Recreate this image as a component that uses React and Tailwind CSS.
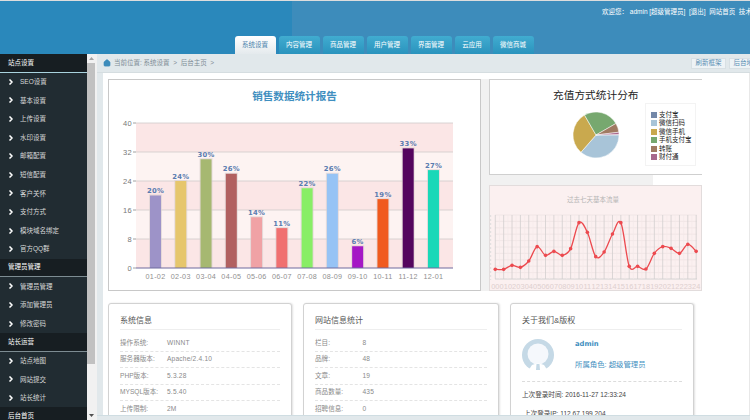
import { ChevronRight, House } from "lucide-react";

const sideMenu = [
  { title: "站点设置", line: "border-[#a9d3de]", items: ["SEO设置", "基本设置", "上传设置", "水印设置", "邮箱配置", "短信配置", "客户关怀", "支付方式", "模块域名绑定", "官方QQ群"] },
  { title: "管理员管理", line: "border-[#7d8c92]", items: ["管理员管理", "添加管理员", "修改密码"] },
  { title: "站长运营", line: "border-[#7d8c92]", items: ["站点地图", "网站提交", "站长统计"] },
  { title: "后台首页", line: "border-[#7d8c92]", items: [] },
];

const tabs = [
  { name: "内容管理", w: "w-[41px]" },
  { name: "商品管理", w: "w-[41px]" },
  { name: "用户管理", w: "w-[41px]" },
  { name: "界面管理", w: "w-[41px]" },
  { name: "云应用", w: "w-[35px]" },
  { name: "微信商城", w: "w-[41px]" },
];

const bars = [
  ["01-02", 20, "#9d93c8"],
  ["02-03", 24, "#e6c66c"],
  ["03-04", 30, "#a6b871"],
  ["04-05", 26, "#b16060"],
  ["05-06", 14, "#f0a2a5"],
  ["06-07", 11, "#f07070"],
  ["07-08", 22, "#88ee66"],
  ["08-09", 26, "#96c3f5"],
  ["09-10", 6, "#a517c5"],
  ["10-11", 19, "#f05a1e"],
  ["11-12", 33, "#54055e"],
  ["12-01", 27, "#19d8b8"],
];

const pieSlices = [
  { from: 0, to: 131, color: "#a8c4d8" },
  { from: 131, to: 240, color: "#c9a94e" },
  { from: 240, to: 330, color: "#77a86f" },
  { from: 330, to: 353, color: "#a07a62" },
  { from: 353, to: 359, color: "#a8688c" },
];

const pieLegend = [
  ["支付宝", "#7488a8"],
  ["微信扫码", "#a8c4d8"],
  ["微信手机", "#c9a94e"],
  ["手机支付宝", "#77a86f"],
  ["转账", "#a07a62"],
  ["财付通", "#a8688c"],
];

const traffic = [178, 178, 166, 172, 153, 110, 136, 124, 136, 116, 38, 67, 140, 126, 72, 38, 169, 169, 177, 130, 110, 115, 130, 103, 124];

const systemInfo = [
  ["操作系统:", "WINNT"],
  ["服务器版本:", "Apache/2.4.10"],
  ["PHP版本:", "5.3.28"],
  ["MYSQL版本:", "5.5.40"],
  ["上传限制:", "2M"],
];

const siteInfo = [
  ["栏目:", "8"],
  ["品牌:", "48"],
  ["文章:", "19"],
  ["商品数量:", "435"],
  ["招聘信息:", "0"],
];

const slicePath = (cx, cy, r, from, to) => {
  const a = (from * Math.PI) / 180;
  const b = (to * Math.PI) / 180;
  const large = to - from > 180 ? 1 : 0;
  return `M${cx} ${cy}L${cx + r * Math.cos(a)} ${cy + r * Math.sin(a)}A${r} ${r} 0 ${large} 1 ${cx + r * Math.cos(b)} ${cy + r * Math.sin(b)}Z`;
};

// smooth line through the points
const smoothPath = (pts) => {
  let d = `M${pts[0][0]} ${pts[0][1]}`;
  for (let i = 0; i < pts.length - 1; i++) {
    const p0 = pts[i - 1] || pts[i];
    const p1 = pts[i];
    const p2 = pts[i + 1];
    const p3 = pts[i + 2] || p2;
    const c1x = p1[0] + (p2[0] - p0[0]) / 6;
    const c1y = p1[1] + (p2[1] - p0[1]) / 6;
    const c2x = p2[0] - (p3[0] - p1[0]) / 6;
    const c2y = p2[1] - (p3[1] - p1[1]) / 6;
    d += `C${c1x} ${c1y} ${c2x} ${c2y} ${p2[0]} ${p2[1]}`;
  }
  return d;
};

function Sidebar() {
  return (
    <div className="w-[87px] h-full shrink-0 overflow-hidden bg-[#212c32]">
      {sideMenu.map((group) => (
        <div key={group.title}>
          <div className={`h-[18.6px] flex items-center pl-[8px] bg-[#171e22] border-b ${group.line} text-[6.5px] text-white`}>
            {group.title}
          </div>
          {group.items.map((item) => (
            <div key={item} className="h-[18.6px] flex items-center pl-[7px] text-[6.5px] text-[#d8d8d8]">
              <ChevronRight size={8} strokeWidth={5} className="text-white mr-[5px] shrink-0" />
              <span>{item}</span>
            </div>
          ))}
        </div>
      ))}
    </div>
  );
}

function ScrollBar() {
  return (
    <div className="w-[10px] h-full shrink-0 flex flex-col bg-[#f1f1f1] pr-[2px]">
      <div className="h-[9px] flex items-center justify-center">
        <svg width="5" height="3" viewBox="0 0 5 3"><polygon points="2.5,0 5,3 0,3" fill="#a3a3a3" /></svg>
      </div>
      <div className="h-[301px] bg-[#c1c1c1]" />
      <div className="flex-1" />
      <div className="h-[9px] flex items-center justify-center">
        <svg width="5" height="3" viewBox="0 0 5 3"><polygon points="0,0 5,0 2.5,3" fill="#505050" /></svg>
      </div>
    </div>
  );
}

function SalesChart() {
  const bands = [
    [123, "#fbe6e6"],
    [152, "#fdf3f2"],
    [181, "#fbe6e6"],
    [210, "#fdf3f2"],
    [239, "#fbe6e6"],
  ];
  return (
    <div className="w-[373px] h-[212px] shrink-0 bg-white border border-[#c8c8c8]">
      <div className="h-[33px] pt-[9px] text-center text-[10.6px] leading-[14px] font-bold text-[#3f8fc0]">
        销售数据统计报告
      </div>
      <svg width="371" height="177" viewBox="109 113 371 177" className="block">
        {bands.map(([y, c]) => (
          <rect key={y} x="136" y={y} width="317" height="29" fill={c} />
        ))}
        {[40, 32, 24, 16, 8, 0].map((v, i) => (
          <g key={v}>
            {v > 0 && <line x1="136" x2="453" y1={123 + i * 29} y2={123 + i * 29} stroke="#cfcaca" strokeWidth="0.8" />}
            <line x1="133" x2="136" y1={123 + i * 29} y2={123 + i * 29} stroke="#888" strokeWidth="0.8" />
            <text x="132" y={126 + i * 29} textAnchor="end" fontSize="7.5" letterSpacing="0.3" fill="#777" fontFamily="Liberation Sans">{v}</text>
          </g>
        ))}
        {bars.map(([label, value, color], i) => {
          const cx = 155.5 + i * 25.27;
          const h = value * 3.625;
          return (
            <g key={label}>
              <rect x={cx - 6.5} y={268 - h - 1} width="13" height={h + 1} fill="#d8cfcf" opacity="0.6" />
              <rect x={cx - 5.5} y={268 - h} width="11" height={h} fill={color} />
              <text x={cx} y={268 - h - 2.5} textAnchor="middle" fontSize="6.8" fontWeight="bold" letterSpacing="0.3" fill="#5a7cb0" fontFamily="DejaVu Sans">{value}%</text>
              <text x={cx} y="279" textAnchor="middle" fontSize="7.2" letterSpacing="0.3" fill="#8f8f8f" fontFamily="Liberation Sans">{label}</text>
            </g>
          );
        })}
        <line x1="136" x2="453" y1="268" y2="268" stroke="#6f6a9e" strokeWidth="1" />
      </svg>
    </div>
  );
}

function PieCard() {
  return (
    <div className="h-[96px] bg-white border-y border-l border-[#cfcfcf] flex">
      <div className="w-[155px] shrink-0">
        <div className="pt-[8px] pl-[63px] text-[10.7px] leading-[14px] whitespace-nowrap text-[#222]">充值方式统计分布</div>
        <svg width="60" height="50" viewBox="565.5 110 60 50" className="block ml-[76px] mt-[8px]">
          {pieSlices.map((s) => (
            <path key={s.from} d={slicePath(595.5, 135, 23, s.from, s.to)} fill={s.color} stroke="#fff" strokeWidth="0.5" />
          ))}
        </svg>
      </div>
      <div className="w-[51px] h-[63px] mt-[23px] pt-[6.5px] pl-[5px] border border-[#f3f3f3]">
        {pieLegend.map(([name, color]) => (
          <div key={name} className="h-[8.5px] flex items-center gap-[2px] text-[6.5px] whitespace-nowrap text-[#222]">
            <span className="w-[6px] h-[6px] shrink-0" style={{ backgroundColor: color }} />
            {name}
          </div>
        ))}
      </div>
    </div>
  );
}

function TrafficCard() {
  const pts = traffic.map((y, i) => [495.3 + i * 8.37, 210 + y / 3]);
  return (
    <div className="h-[106px] bg-[#fbf0f0] border border-[#e2dcdc]">
      <div className="pt-[8px] h-[24px] pr-[5px] text-center text-[6.5px] leading-[12px] text-[#b5b5b5]">过去七天基本流量</div>
      <svg width="211" height="80" viewBox="490 210 211 80" className="block">
        <line x1="490.7" x2="490.7" y1="215" y2="280" stroke="#ddd" strokeDasharray="2 2" />
        {[...Array(11)].map((_, i) => (
          <line key={i} x1="495" x2="697" y1={215 + i * 6.4} y2={215 + i * 6.4} stroke={i === 10 ? "#ccc" : "#efe3e3"} strokeWidth="0.8" />
        ))}
        {[...Array(24)].map((_, i) => (
          <line key={i} x1={499.5 + i * 8.37} x2={499.5 + i * 8.37} y1="215" y2="279" stroke="#f3e9e9" strokeWidth="0.6" />
        ))}
        {pts.map(([x], i) => (
          <line key={i} x1={x} x2={x} y1="215" y2="279" stroke="#d2cece" strokeWidth="0.8" />
        ))}
        <path d={smoothPath(pts)} fill="none" stroke="#ec4a4f" strokeWidth="1.3" />
        {pts.map(([x, y], i) => (
          <circle key={i} cx={x} cy={y} r="1.8" fill="#ec4a4f" />
        ))}
        {pts.map(([x], i) => (
          <text key={i} x={x} y="289" textAnchor="middle" fontSize="7.4" fill="#ddcfcf" fontFamily="Liberation Sans">
            {String(i).padStart(2, "0")}
          </text>
        ))}
      </svg>
    </div>
  );
}

function InfoCard({ title, rows, width, valueLeft }) {
  return (
    <div className={`${width} h-[130px] shrink-0 bg-white border border-[#d2d2d2] rounded-[3px] shadow-[1px_0_2px_rgba(0,0,0,0.12)] px-[11px]`}>
      <div className="h-[26px] pt-[12px] border-b border-[#eeeeee] text-[8px] leading-[10px] text-[#555]">{title}</div>
      <div className="mt-[5px]">
        {rows.map(([label, value]) => (
          <div key={label} className="h-[16.5px] flex items-center border-b border-dashed border-[#e4e4e4] text-[6.6px] text-[#8a8a8a]">
            <span className={valueLeft}>{label}</span>
            <span className="tracking-[0.2px]">{value}</span>
          </div>
        ))}
      </div>
    </div>
  );
}

function AboutCard() {
  return (
    <div className="w-[184px] h-[130px] shrink-0 bg-white border border-[#d2d2d2] rounded-[3px] shadow-[1px_0_2px_rgba(0,0,0,0.12)] px-[11px]">
      <div className="h-[26px] pt-[12px] border-b border-[#eeeeee] text-[8px] leading-[10px] text-[#555]">关于我们&版权</div>
      <div className="h-[52px] flex border-b border-dashed border-[#dcdcdc]">
        <svg width="32" height="32" viewBox="0 0 32 32" className="mt-[9px] shrink-0">
          <circle cx="16" cy="16" r="16" fill="#c5d9e6" />
          <circle cx="16" cy="15" r="10.5" fill="#f5f8fc" />
          <path d="M6 32 L26 32 L22 26 Q16 23 10 26 Z" fill="#fff" />
          <path d="M14.5 25 L17.5 25 L18 31 L14 31 Z" fill="#c5d9e6" />
        </svg>
        <div className="ml-[21px] pt-[8px]">
          <div className="h-[12px] text-[6.8px] leading-[12px] font-bold text-[#3f8fc0] [font-family:'DejaVu_Sans',sans-serif]">admin</div>
          <div className="mt-[9px] text-[7.4px] leading-[12px] whitespace-nowrap text-[#3f8fc0]">所属角色: 超级管理员</div>
        </div>
      </div>
      <div className="mt-[8px] text-[6.6px] leading-[10px] whitespace-nowrap text-[#444]">上次登录时间: 2016-11-27 12:33:24</div>
      <div className="mt-[9px] ml-[2px] text-[6.6px] leading-[10px] whitespace-nowrap text-[#444]">上次登录IP: 112.67.199.204</div>
    </div>
  );
}

export default function App() {
  return (
    <div className="w-[750px] h-[420px] overflow-hidden flex flex-col bg-white [font-family:'Liberation_Sans','Noto_Sans_CJK_SC',sans-serif]">
      {/* header */}
      <div className="h-[54px] shrink-0 flex flex-col border-t border-[#dddddd] bg-[linear-gradient(90deg,#2a88bb_292px,#3d8cbb_292px)]">
        <div className="h-[35px] pt-[5px] pl-[602px] text-[6.5px] leading-[12px] whitespace-nowrap overflow-hidden text-white">
          欢迎您： admin [超级管理员] &nbsp;[退出] &nbsp;网站首页 &nbsp;技术支持
        </div>
        <div className="h-[18px] flex pl-[234.5px] gap-[3px]">
          <div className="w-[41px] rounded-t-[3px] flex items-center justify-center text-[6.5px] text-[#4c84ad] bg-[linear-gradient(#ffffff,#e4eaed)]">
            系统设置
          </div>
          {tabs.map((tab) => (
            <div key={tab.name} className={`${tab.w} rounded-t-[3px] flex items-center justify-center text-[6.5px] text-white bg-[linear-gradient(#41acd0,#2a93bd)]`}>
              {tab.name}
            </div>
          ))}
        </div>
      </div>

      <div className="flex-1 min-h-0 flex">
        <Sidebar />
        <ScrollBar />

        <div className="flex-1 min-w-0 flex flex-col bg-[#e1e8eb]">
          {/* breadcrumb */}
          <div className="h-[19px] shrink-0 flex items-center pl-[6px] border-b border-[#d5dde0] text-[6.5px] text-[#7f8d96] whitespace-nowrap overflow-hidden">
            <House size={8} fill="#3d8cbb" className="text-[#3d8cbb] mr-[3px] shrink-0" />
            当前位置: 系统设置 &nbsp;&gt;&nbsp; 后台主页 &nbsp;&gt;
            <div className="ml-auto flex gap-[3px] shrink-0 -mr-[14px]">
              <span className="w-[35px] h-[11px] flex items-center justify-center bg-[#eef3f6] border border-[#d8e0e4] text-[6.5px] text-[#5b8fb4]">刷新框架</span>
              <span className="w-[35px] h-[11px] flex items-center justify-center bg-[#eef3f6] border border-[#d8e0e4] text-[6.5px] text-[#5b8fb4]">后台地图</span>
            </div>
          </div>

          <div className="flex-1 min-h-0 ml-[6px] overflow-hidden bg-white pl-[5px] pt-[6px] border-r border-[#e8e8e8]">
            <div className="flex">
              <SalesChart />
              <div className="w-[8px] shrink-0 bg-[#f1f1f1]" />
              <div className="w-[213px] shrink-0 flex flex-col">
                <PieCard />
                <div className="h-[10px] w-[164px] bg-[#f1f1f1]" />
                <TrafficCard />
              </div>
            </div>

            <div className="flex gap-[11px] mt-[12px]">
              <InfoCard title="系统信息" rows={systemInfo} width="w-[184px]" valueLeft="w-[47px]" />
              <InfoCard title="网站信息统计" rows={siteInfo} width="w-[196px]" valueLeft="w-[47.5px]" />
              <AboutCard />
            </div>
          </div>

          <div className="h-[5px] shrink-0 border-t border-[#cfdde2]" />
        </div>
      </div>
    </div>
  );
}
